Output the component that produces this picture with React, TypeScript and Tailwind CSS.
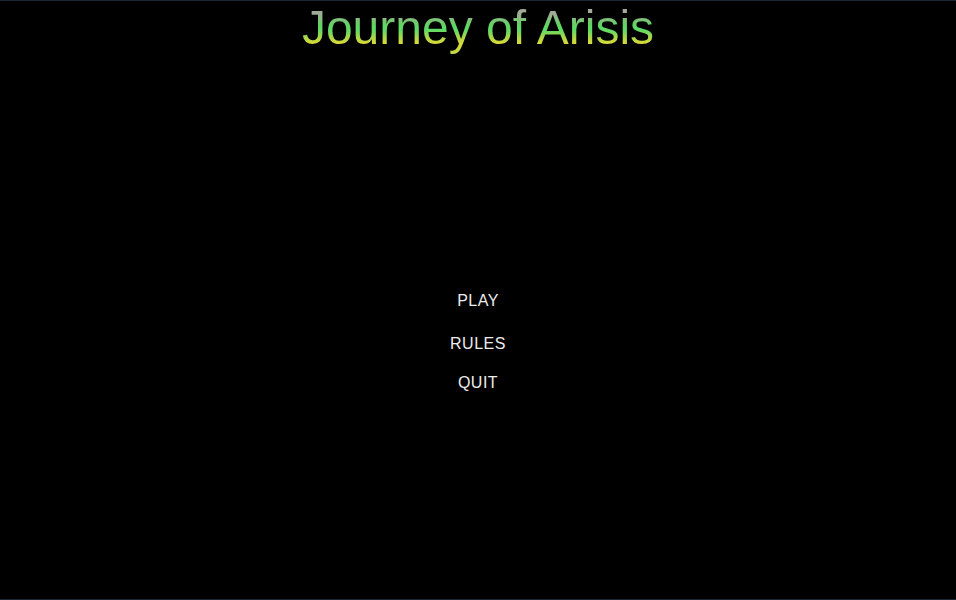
import React from 'react'

const menu = [
  { label: 'PLAY', cls: 'mt-[237px]' },
  { label: 'RULES', cls: 'mt-[25px]' },
  { label: 'QUIT', cls: 'mt-[21px]' },
]

export default function App() {
  return (
    <div className="h-[600px] w-full bg-black border-y border-[#1c2736] flex flex-col items-center font-['Liberation_Sans',Arial,sans-serif]">
      <h1 className="-mt-px text-[48px] leading-[55px] font-normal bg-[linear-gradient(180deg,#a8a89c_16%,#98b090_28%,#64d262_44%,#5cdc66_54%,#a8d64a_68%,#d6da3a_78%,#c0d844_100%)] bg-clip-text text-transparent">
        Journey of Arisis
      </h1>
      {menu.map((m) => (
        <button key={m.label}
          className={`${m.cls} text-[16px] leading-[18px] text-[#ececec] tracking-[0.5px] bg-transparent`}>
          {m.label}
        </button>
      ))}
    </div>
  )
}
